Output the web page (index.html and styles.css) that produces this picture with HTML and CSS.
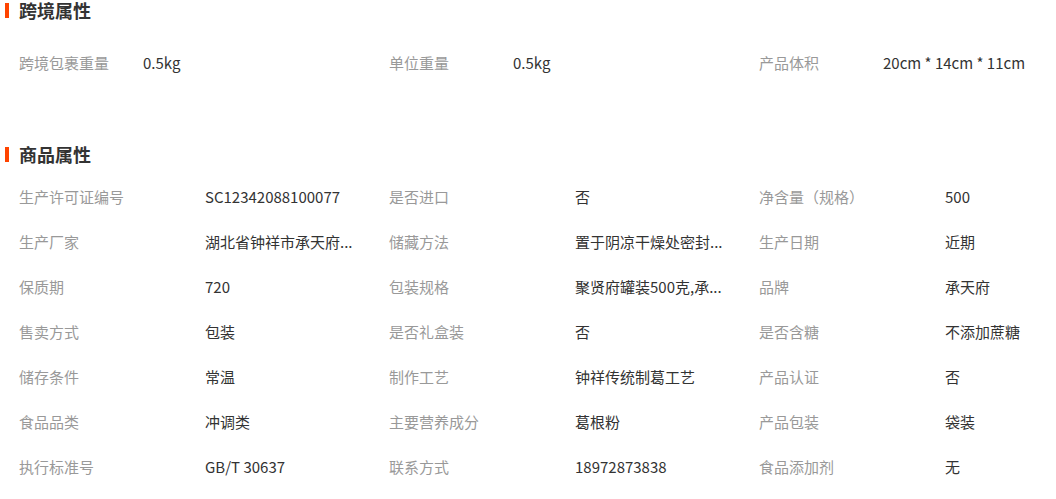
FILE: index.html
```html
<!DOCTYPE html>
<html lang="zh">
<head>
<meta charset="utf-8">
<link rel="stylesheet" href="styles.css">
</head>
<body>
<section class="sec sec-cross">
  <h2 class="sec-title"><span class="bar"></span>跨境属性</h2>
  <div class="attrs attrs-short">
    <div class="item"><span class="k">跨境包裹重量</span><span class="v">0.5kg</span></div>
    <div class="item"><span class="k">单位重量</span><span class="v">0.5kg</span></div>
    <div class="item"><span class="k">产品体积</span><span class="v">20cm * 14cm * 11cm</span></div>
  </div>
</section>
<section class="sec sec-goods">
  <h2 class="sec-title"><span class="bar"></span>商品属性</h2>
  <div class="attrs">
    <div class="item"><span class="k">生产许可证编号</span><span class="v">SC12342088100077</span></div>
    <div class="item"><span class="k">是否进口</span><span class="v">否</span></div>
    <div class="item"><span class="k">净含量（规格）</span><span class="v">500</span></div>
    <div class="item"><span class="k">生产厂家</span><span class="v">湖北省钟祥市承天府...</span></div>
    <div class="item"><span class="k">储藏方法</span><span class="v">置于阴凉干燥处密封...</span></div>
    <div class="item"><span class="k">生产日期</span><span class="v">近期</span></div>
    <div class="item"><span class="k">保质期</span><span class="v">720</span></div>
    <div class="item"><span class="k">包装规格</span><span class="v">聚贤府罐装500克,承...</span></div>
    <div class="item"><span class="k">品牌</span><span class="v">承天府</span></div>
    <div class="item"><span class="k">售卖方式</span><span class="v">包装</span></div>
    <div class="item"><span class="k">是否礼盒装</span><span class="v">否</span></div>
    <div class="item"><span class="k">是否含糖</span><span class="v">不添加蔗糖</span></div>
    <div class="item"><span class="k">储存条件</span><span class="v">常温</span></div>
    <div class="item"><span class="k">制作工艺</span><span class="v">钟祥传统制葛工艺</span></div>
    <div class="item"><span class="k">产品认证</span><span class="v">否</span></div>
    <div class="item"><span class="k">食品品类</span><span class="v">冲调类</span></div>
    <div class="item"><span class="k">主要营养成分</span><span class="v">葛根粉</span></div>
    <div class="item"><span class="k">产品包装</span><span class="v">袋装</span></div>
    <div class="item"><span class="k">执行标准号</span><span class="v">GB/T 30637</span></div>
    <div class="item"><span class="k">联系方式</span><span class="v">18972873838</span></div>
    <div class="item"><span class="k">食品添加剂</span><span class="v">无</span></div>
  </div>
</section>
</body>
</html>
```
FILE: styles.css
```css
* { box-sizing: border-box; }
html, body { margin: 0; padding: 0; background: #fff; }
body {
  font-family: "Noto Sans CJK SC", "Noto Sans", sans-serif;
  font-size: 15px;
  color: #333;
  width: 1056px;
  overflow: hidden;
}
.sec-title {
  margin: 0;
  height: 20px;
  display: flex;
  align-items: center;
  font-size: 18px;
  font-weight: bold;
  color: #333;
  line-height: 20px;
}
.bar {
  width: 4px;
  height: 15px;
  background: #ff4400;
  margin-left: 5px;
  margin-right: 10px;
}
.attrs {
  display: grid;
  grid-template-columns: 370px 370px 1fr;
  padding-left: 19px;
  padding-top: 10px;
}
.attrs-short { padding-top: 20px; }
.sec-goods { margin-top: 59px; }
.item {
  display: flex;
  height: 45px;
  line-height: 45px;
  white-space: nowrap;
}
.k {
  width: 186px;
  flex: none;
  color: #999;
}
.attrs-short .k { width: 124px; }
.v {
  color: #333;
}
```
